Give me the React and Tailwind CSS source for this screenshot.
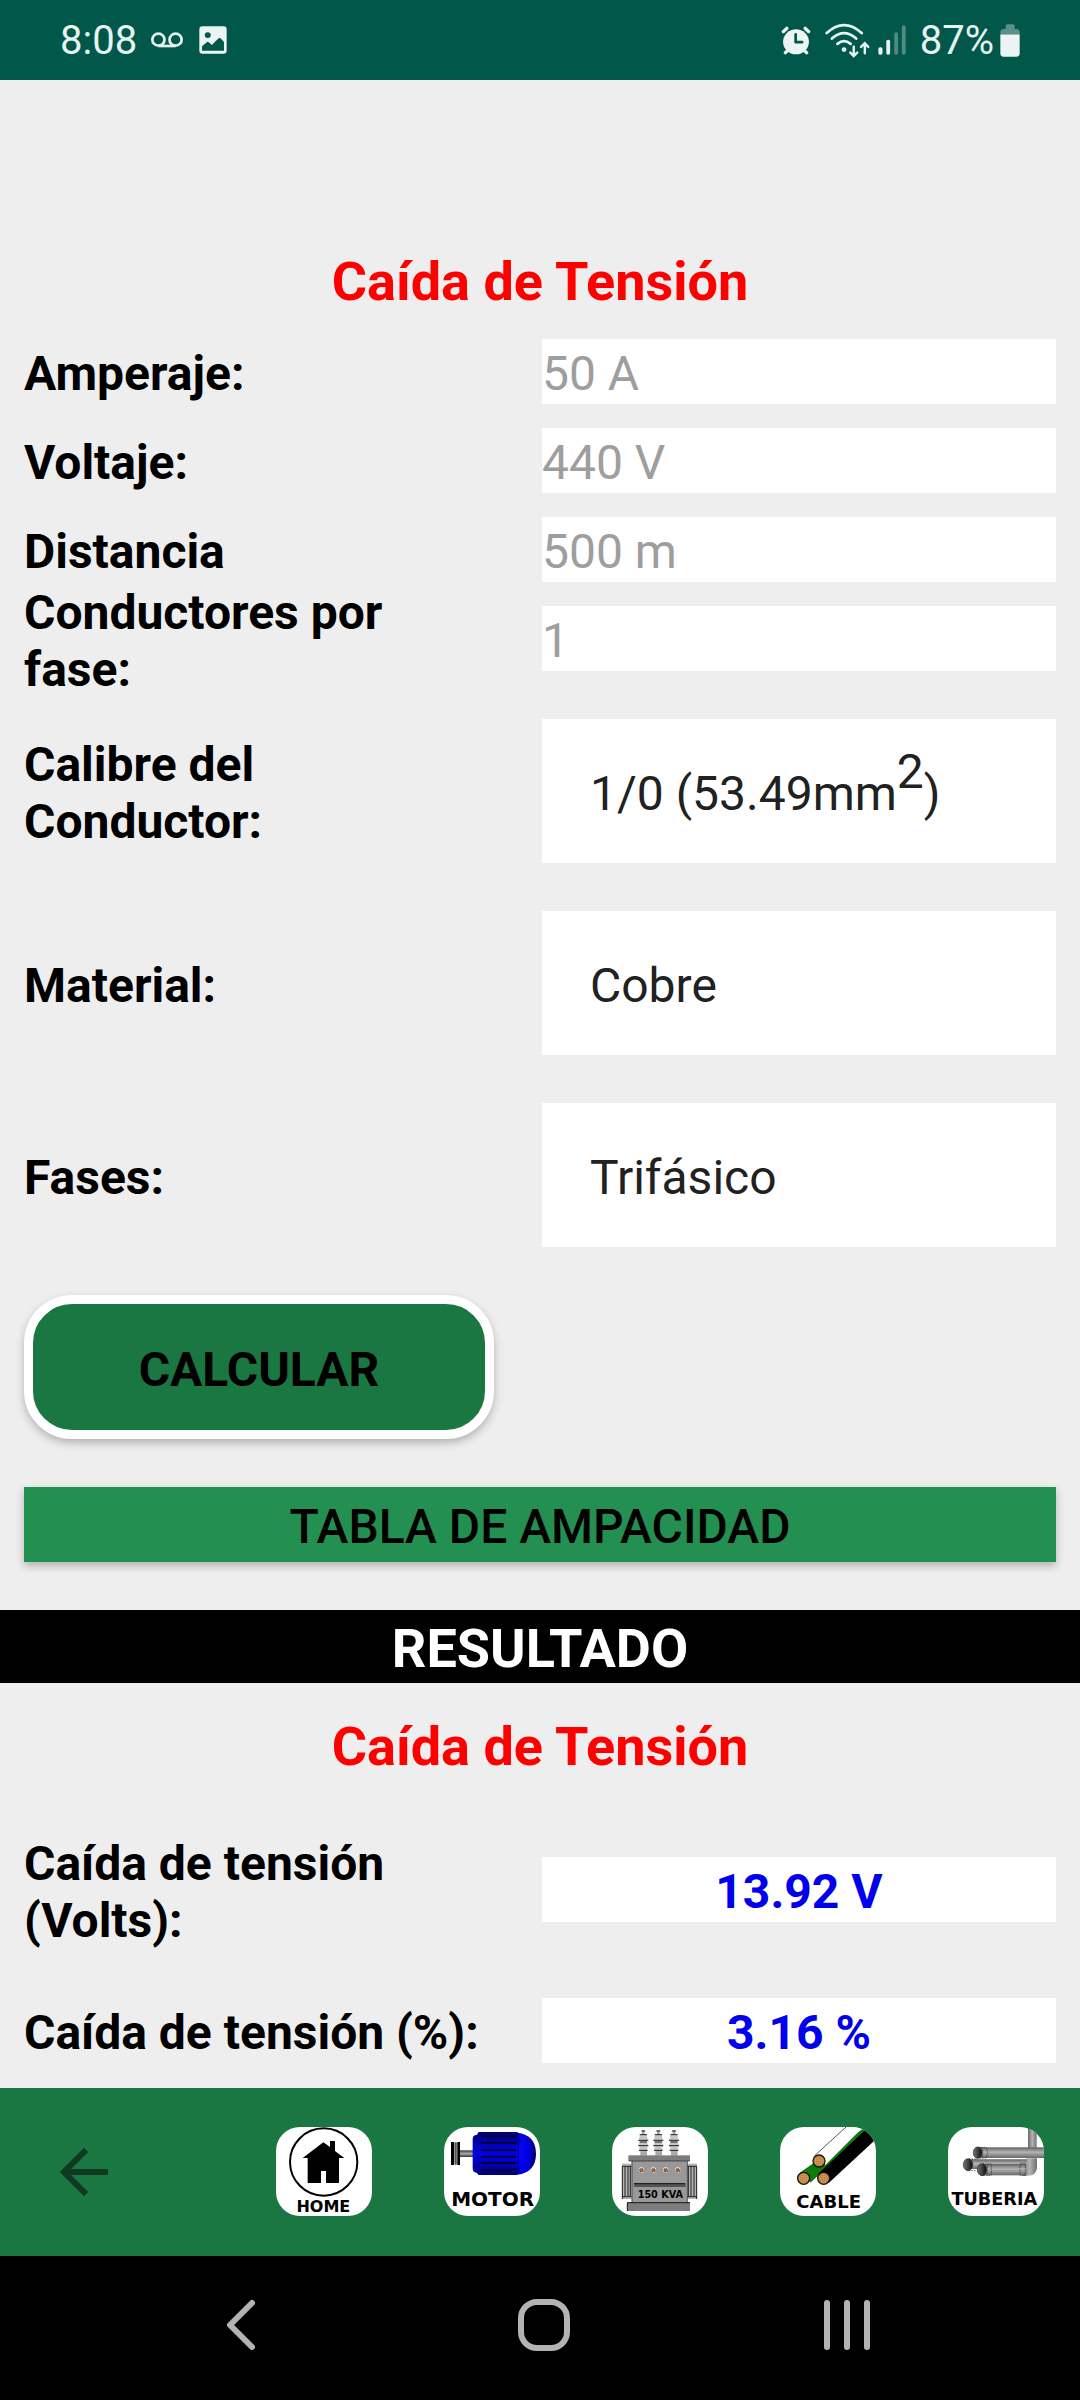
import React from "react";

const labelClass = "-my-7 pt-1 pr-12 text-[48px] leading-[57px] font-bold text-black";

function VoicemailIcon() {
  return (
    <svg viewBox="440 94 95 48" preserveAspectRatio="none" className="h-4 w-8" fill="none" stroke="#e6f3f0" strokeWidth="8" aria-hidden="true">
      <circle cx="462" cy="117" r="18" />
      <circle cx="513" cy="117" r="18" />
      <path d="M462 136H513" />
    </svg>
  );
}

function PictureIcon() {
  return (
    <svg viewBox="580 77 83 86" preserveAspectRatio="none" className="size-7" aria-hidden="true">
      <path
        fillRule="evenodd"
        fill="#ecf4f3"
        d="M590 78H654Q662 78 662 87V153Q662 162 653 162H590Q581 162 581 153V87Q581 78 590 78ZM589 153H654V126L644 115Q641 112 638 115L618 135L609 127Q606 124 603 127L589 139ZM606 96A9 9 0 1 0 606 114A9 9 0 1 0 606 96Z"
      />
    </svg>
  );
}

function AlarmIcon() {
  return (
    <svg viewBox="701 76 88 88" preserveAspectRatio="none" className="h-[29px] w-[30px]" aria-hidden="true">
      <circle cx="745" cy="124" r="38" fill="#ecf4f3" />
      <g stroke="#ecf4f3" strokeWidth="10" strokeLinecap="round">
        <path d="M708 93L718 83M782 93L772 83M714 157L722 149M776 157L768 149" />
      </g>
      <path d="M744 101V125H763" fill="none" stroke="#01584a" strokeWidth="8" strokeLinecap="round" strokeLinejoin="round" />
    </svg>
  );
}

function WifiIcon() {
  return (
    <svg viewBox="828 66 130 104" preserveAspectRatio="none" className="h-[35px] w-[45px]" fill="none" stroke="#e6f3f0" strokeWidth="8" strokeLinecap="round" aria-hidden="true">
      <path d="M833 96Q883 49 934 96M848 112Q883 80 918 112M864 128Q883 112 902 128" />
      <circle cx="883" cy="145" r="3" />
      <path d="M911 136V163M901 154L911 164L921 154M943 156V127M932 137L943 126L953 137" strokeWidth="7" />
    </svg>
  );
}

function SignalIcon() {
  return (
    <svg viewBox="983 74 81 90" preserveAspectRatio="none" className="h-[30px] w-7" aria-hidden="true">
      <rect x="984" y="141" width="12" height="22" rx="5" fill="#e6f3f0" />
      <rect x="1007" y="118" width="11" height="45" rx="5" fill="#e6f3f0" />
      <rect x="1030" y="96" width="11" height="67" rx="5" fill="#4f8b81" />
      <rect x="1052" y="75" width="11" height="88" rx="5" fill="#4f8b81" />
    </svg>
  );
}

function BatteryIcon() {
  return (
    <svg viewBox="1335 71 60 98" preserveAspectRatio="none" className="h-[33px] w-5" aria-hidden="true">
      <path d="M1352 78Q1352 72 1357 72H1374Q1379 72 1379 78V86H1384Q1394 86 1394 96V103H1336V96Q1336 86 1346 86H1352Z" fill="#5a9087" />
      <path d="M1336 102H1394V158Q1394 168 1384 168H1346Q1336 168 1336 158Z" fill="#ecf4f3" />
    </svg>
  );
}

function StatusBar() {
  return (
    <header className="flex h-20 items-center justify-between bg-[#01584a] px-[60px] text-[40px] leading-[47px] text-[#e6f3f0]">
      <div className="flex items-center">
        <span>8:08</span>
        <span className="ml-[14px] flex items-center gap-4">
          <VoicemailIcon />
          <PictureIcon />
        </span>
      </div>
      <div className="flex items-center">
        <span className="flex items-center gap-[14px]">
          <AlarmIcon />
          <WifiIcon />
        </span>
        <span className="ml-2">
          <SignalIcon />
        </span>
        <span className="ml-[14px] mr-[6px]">87%</span>
        <BatteryIcon />
      </div>
    </header>
  );
}

function TextField({ id, label, value }) {
  return (
    <div className="grid grid-cols-2 items-center gap-1">
      <label htmlFor={id} className={labelClass}>
        {label}
      </label>
      <input
        id={id}
        type="text"
        placeholder={value}
        className="h-[65px] w-full min-w-0 bg-white pt-1 text-[48px] leading-[57px] text-black outline-none placeholder:text-[#9e9e9e]"
      />
    </div>
  );
}

function SelectField({ id, label, value, children }) {
  return (
    <div className="grid grid-cols-2 items-center gap-1">
      <label htmlFor={id} className={labelClass}>
        {label}
      </label>
      {children ? (
        <div className="relative flex h-36 items-center bg-white px-12 pt-1 text-[48px] leading-[57px] text-[#212121]">
          <span aria-hidden="true">{children}</span>
          <select id={id} className="absolute inset-0 size-full appearance-none opacity-0">
            <option>{value}</option>
          </select>
        </div>
      ) : (
        <select
          id={id}
          className="h-36 w-full min-w-0 appearance-none bg-white px-12 pt-1 text-[48px] leading-[57px] text-[#212121]"
        >
          <option>{value}</option>
        </select>
      )}
    </div>
  );
}

function ResultField({ id, label, value }) {
  return (
    <div className="grid grid-cols-2 items-center gap-1">
      <label htmlFor={id} className={labelClass}>
        {label}
      </label>
      <output id={id} className="block bg-white pt-1 text-center text-[48px] leading-[61px] font-bold text-[#0000ee]">
        {value}
      </output>
    </div>
  );
}

const tileClass = "h-[89px] w-24 rounded-3xl bg-white";
const tileFont = '"DejaVu Sans", sans-serif';

function HomeTile() {
  return (
    <svg viewBox="0 0 288 267" className={tileClass} aria-hidden="true">
      <circle cx="143" cy="105" r="101" fill="none" stroke="#000" strokeWidth="6" />
      <path d="M80 93L142 46L162 60V42H177V72L205 93H189V168H150V132H135V168H95V93Z" />
      <text x="142" y="255" textAnchor="middle" fontFamily={tileFont} fontWeight="700" fontSize="48">
        HOME
      </text>
    </svg>
  );
}

function MotorTile() {
  return (
    <svg viewBox="0 0 288 267" className={tileClass} aria-hidden="true">
      <defs>
        <linearGradient id="motorBody" x1="0" y1="0" x2="0" y2="1">
          <stop offset="0" stopColor="#000070" />
          <stop offset="0.3" stopColor="#0000c0" />
          <stop offset="0.5" stopColor="#0000e8" />
          <stop offset="0.7" stopColor="#0000c8" />
          <stop offset="1" stopColor="#000078" />
        </linearGradient>
        <radialGradient id="motorCap" cx="0.1" cy="0.5" r="0.9">
          <stop offset="0" stopColor="#0505ff" />
          <stop offset="0.6" stopColor="#0000d8" />
          <stop offset="1" stopColor="#00006a" />
        </radialGradient>
        <linearGradient id="motorShaft" x1="0" y1="0" x2="0" y2="1">
          <stop offset="0" stopColor="#333" />
          <stop offset="0.5" stopColor="#aaa" />
          <stop offset="1" stopColor="#333" />
        </linearGradient>
      </defs>
      <rect x="46" y="70" width="42" height="20" fill="url(#motorShaft)" />
      <rect x="21" y="45" width="9" height="69" fill="#000" />
      <rect x="30" y="47" width="10" height="65" fill="#999" />
      <rect x="34" y="45" width="3" height="69" fill="#333" />
      <rect x="40" y="45" width="8" height="69" fill="#000" />
      <path d="M220 17Q276 24 276 80Q276 136 220 143Z" fill="url(#motorCap)" />
      <path d="M104 15H220L226 24V136L220 144H104L98 137Q86 137 86 124V36Q86 24 98 24Z" fill="url(#motorBody)" />
      <path d="M102 24V137M223 20V140" stroke="#00008c" strokeWidth="3" />
      <path d="M111 28H216M111 48H216M111 69H216M111 89H216M111 108H216M111 129H216" stroke="#000030" strokeWidth="6" />
      <text x="146" y="238" textAnchor="middle" fontFamily={tileFont} fontWeight="700" fontSize="60">
        MOTOR
      </text>
    </svg>
  );
}

function Bushing({ x }) {
  return (
    <g transform={`translate(${x} 0)`}>
      <path d="M-4 10H4V24H9L11 70V86H-9V70L-9 24H-4Z" fill="#aaa" />
      <path d="M-10 24H10L14 40L10 43L15 56L11 60L13 70H-13L-11 60L-15 56L-10 43L-14 40Z" fill="#c6c6c6" />
      <path d="M-6 12H6M-11 23H11M-15 40H15M-11 45H11M-15 56H15M-13 70H13" stroke="#222" strokeWidth="3" />
    </g>
  );
}

function TransformerTile() {
  return (
    <svg viewBox="0 0 288 267" className={tileClass} aria-hidden="true">
      <Bushing x={94} />
      <Bushing x={139} />
      <Bushing x={186} />
      <rect x="30" y="110" width="29" height="106" fill="#b4b4b4" />
      <rect x="226" y="110" width="29" height="106" fill="#b4b4b4" />
      <path d="M30 118H59M31 118V216M39 118V208M48 118V208M55 118V208M30 209H59M226 118H255M254 118V216M246 118V208M237 118V208M229 118V208M226 209H255" stroke="#222" strokeWidth="3" />
      <rect x="59" y="100" width="167" height="127" fill="#999" />
      <rect x="49" y="85" width="185" height="17" fill="#7d7d7d" />
      <path d="M50 102H234M60 102V227M226 102V227" stroke="#222" strokeWidth="2" />
      <rect x="46" y="227" width="188" height="25" fill="#7d7d7d" />
      <path d="M46 252V227H234" fill="none" stroke="#111" strokeWidth="3" />
      <g fill="#fff">
        <circle cx="88" cy="129" r="8" />
        <circle cx="124" cy="129" r="8" />
        <circle cx="161" cy="129" r="8" />
        <circle cx="197" cy="129" r="8" />
      </g>
      <g fill="#b06028" stroke="#222" strokeWidth="2" strokeDasharray="5 4">
        <circle cx="88" cy="130" r="6" />
        <circle cx="124" cy="130" r="6" />
        <circle cx="161" cy="130" r="6" />
        <circle cx="197" cy="130" r="6" />
      </g>
      <rect x="66" y="169" width="155" height="11" fill="#555" />
      <path d="M66 170H219" stroke="#111" strokeWidth="3" />
      <text x="145" y="213" textAnchor="middle" fontFamily={tileFont} fontWeight="700" fontSize="29">
        150 KVA
      </text>
    </svg>
  );
}

function CableTile() {
  return (
    <svg viewBox="0 0 288 267" className={tileClass} aria-hidden="true">
      <defs>
        <pattern id="strands" width="6" height="6" patternUnits="userSpaceOnUse">
          <rect width="6" height="6" fill="#d39a5c" />
          <path d="M0 0H6M0 0V6" stroke="#a86d34" strokeWidth="2" />
        </pattern>
      </defs>
      <path d="M60 138L246 8L256 12L92 165Z" fill="#0a7d0a" stroke="#052" strokeWidth="2" />
      <path d="M104 86L198 0H250L136 114Z" fill="#fff" />
      <path d="M104 86L198 0" stroke="#000" strokeWidth="2" />
      <path d="M114 141L255 10Q274 22 282 42L146 168Z" fill="#000" />
      <g fill="url(#strands)" stroke="#1c120a" strokeWidth="4">
        <circle cx="117" cy="102" r="18" />
        <circle cx="71" cy="154" r="18" />
        <circle cx="131" cy="154" r="18" />
      </g>
      <text x="146" y="244" textAnchor="middle" fontFamily={tileFont} fontWeight="700" fontSize="54">
        CABLE
      </text>
    </svg>
  );
}

function PipeTile() {
  return (
    <svg viewBox="0 0 288 267" className={tileClass} aria-hidden="true">
      <defs>
        <linearGradient id="pipeH" x1="0" y1="0" x2="0" y2="1">
          <stop offset="0" stopColor="#606060" />
          <stop offset="0.45" stopColor="#b4b4b4" />
          <stop offset="1" stopColor="#686868" />
        </linearGradient>
        <linearGradient id="pipeV" x1="0" y1="0" x2="1" y2="0">
          <stop offset="0" stopColor="#666" />
          <stop offset="0.5" stopColor="#b4b4b4" />
          <stop offset="1" stopColor="#707070" />
        </linearGradient>
        <linearGradient id="pipeEnd" x1="0" y1="0" x2="1" y2="0">
          <stop offset="0" stopColor="#777" />
          <stop offset="1" stopColor="#0c0c0c" />
        </linearGradient>
      </defs>
      <rect x="240" y="0" width="26" height="64" fill="url(#pipeV)" />
      <path d="M240 5L248 1" stroke="#222" strokeWidth="4" />
      <path d="M60 97H240V126H60Z" fill="url(#pipeH)" />
      <path d="M236 94H267V122Q265 145 240 146H222V110H236Z" fill="url(#pipeV)" />
      <rect x="88" y="61" width="200" height="32" fill="url(#pipeH)" />
      <rect x="102" y="111" width="132" height="34" fill="url(#pipeH)" />
      <g fill="none" stroke="#222" strokeWidth="2" strokeDasharray="5 3">
        <path d="M90 61H114Q122 76 114 93H90M101 61Q108 76 101 93" />
        <path d="M62 96H88M62 131H84" />
        <path d="M103 111H130V145H103M118 111V145M218 109H232V145H216V109" />
      </g>
      <g fill="url(#pipeEnd)" stroke="#222" strokeWidth="2">
        <ellipse cx="89" cy="77" rx="13" ry="17" />
        <ellipse cx="60" cy="113" rx="14" ry="18" />
        <ellipse cx="102" cy="128" rx="14" ry="18" />
      </g>
      <text x="139" y="234" textAnchor="middle" fontFamily={tileFont} fontWeight="700" fontSize="53">
        TUBERIA
      </text>
    </svg>
  );
}

const tiles = [
  { name: "Home", Tile: HomeTile },
  { name: "Motor", Tile: MotorTile },
  { name: "Transformador 150 KVA", Tile: TransformerTile },
  { name: "Cable", Tile: CableTile },
  { name: "Tuberia", Tile: PipeTile },
];

function AppBar() {
  return (
    <nav className="flex h-[168px] items-center justify-between bg-[#1b7742]">
      <button type="button" aria-label="Atrás" className="flex h-full w-[168px] items-center justify-center">
        <svg viewBox="0 0 144 144" className="size-12" fill="none" stroke="#0d3a20" strokeWidth="18" aria-hidden="true">
          <path d="M144 72H18M78 6L12 72L78 138" />
        </svg>
      </button>
      <div className="flex h-full pb-px">
        {tiles.map(({ name, Tile }) => (
          <button key={name} type="button" aria-label={name} className="flex w-[168px] items-center justify-center">
            <Tile />
          </button>
        ))}
      </div>
    </nav>
  );
}

function SystemNav() {
  const cell = "flex h-full w-[303px] items-center justify-center";
  return (
    <nav className="flex h-36 justify-center bg-black pb-1.5 pl-2">
      <button type="button" aria-label="Volver" className={cell}>
        <svg viewBox="0 0 30 52" className="h-[52px] w-[30px]" fill="none" stroke="#b3b3b3" strokeWidth="6" strokeLinecap="round" strokeLinejoin="round" aria-hidden="true">
          <path d="M26 4L4 26L26 48" />
        </svg>
      </button>
      <button type="button" aria-label="Inicio" className={cell}>
        <svg viewBox="0 0 52 52" className="size-[52px]" fill="none" stroke="#b3b3b3" strokeWidth="6" aria-hidden="true">
          <rect x="3" y="3" width="46" height="46" rx="16" />
        </svg>
      </button>
      <button type="button" aria-label="Recientes" className={cell}>
        <svg viewBox="0 0 48 52" className="h-[52px] w-12" stroke="#b3b3b3" strokeWidth="6" strokeLinecap="round" aria-hidden="true">
          <path d="M4 4V48M24 4V48M44 4V48" />
        </svg>
      </button>
    </nav>
  );
}

export default function App() {
  return (
    <div className='flex min-h-screen flex-col bg-[#eeeeee] font-["Roboto",sans-serif]'>
      <StatusBar />
      <main className="flex-1">
        <form className="px-6 pt-[170px]" onSubmit={(e) => e.preventDefault()}>
          <h1 className="text-center text-[54px] leading-[63px] font-bold text-[#ff0000]">Caída de Tensión</h1>
          <div className="mt-[26px] flex flex-col gap-6">
            <TextField id="amperaje" label="Amperaje:" value="50 A" />
            <TextField id="voltaje" label="Voltaje:" value="440 V" />
            <TextField id="distancia" label="Distancia" value="500 m" />
            <TextField id="conductores" label="Conductores por fase:" value="1" />
          </div>
          <div className="mt-12 flex flex-col gap-12">
            <SelectField id="calibre" label="Calibre del Conductor:" value="1/0 (53.49mm²)">
              1/0 (53.49mm<span className="align-[22px] leading-[0px]">2</span>)
            </SelectField>
            <SelectField id="material" label="Material:" value="Cobre" />
            <SelectField id="fases" label="Fases:" value="Trifásico" />
          </div>
          <button
            type="submit"
            className="mt-12 block h-36 w-[470px] rounded-[48px] border-[9px] border-white bg-[#1b7742] pt-1 text-[48px] leading-[57px] font-bold text-black shadow-[0_4px_8px_rgba(0,0,0,0.25)]"
          >
            CALCULAR
          </button>
          <button
            type="button"
            className="mt-12 block h-[75px] w-full bg-[#239051] pt-1 text-[48px] leading-[57px] font-medium text-black shadow-[0_4px_8px_rgba(0,0,0,0.25)]"
          >
            TABLA DE AMPACIDAD
          </button>
        </form>
        <h2 className="mt-12 bg-black pt-1 text-center text-[54px] leading-[69px] font-bold text-white">RESULTADO</h2>
        <section className="px-6 pt-8">
          <h3 className="text-center text-[54px] leading-[63px] font-bold text-[#ff0000]">Caída de Tensión</h3>
          <div className="mt-[79px] flex flex-col gap-[76px]">
            <ResultField id="volts" label="Caída de tensión (Volts):" value="13.92 V" />
            <ResultField id="porcentaje" label="Caída de tensión (%):" value="3.16 %" />
          </div>
        </section>
      </main>
      <AppBar />
      <SystemNav />
    </div>
  );
}
